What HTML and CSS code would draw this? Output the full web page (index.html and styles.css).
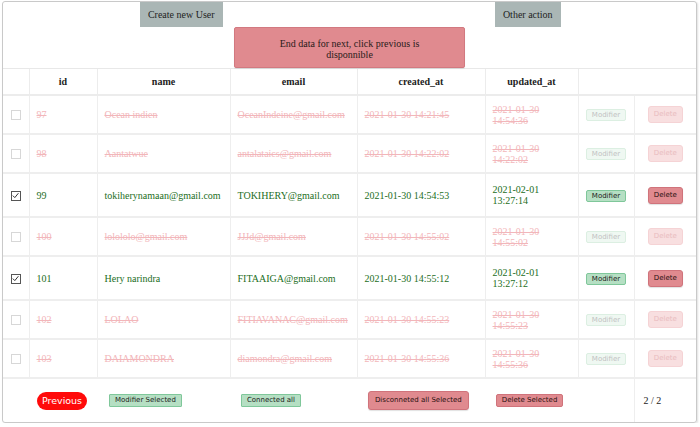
FILE: index.html
```html
<!DOCTYPE html>
<html>
<head>
<meta charset="utf-8">
<link rel="stylesheet" href="styles.css">
</head>
<body>
<div class="card">
  <div class="top">
    <div class="half"><button class="gray-btn">Create new User</button></div>
    <div class="half"><button class="gray-btn">Other action</button></div>
  </div>
  <div class="notice-row">
    <div class="notice">End data for next, click previous is disponnible</div>
  </div>
  <table class="users">
    <colgroup>
      <col class="c-check"><col class="c-id"><col class="c-name"><col class="c-email"><col class="c-created"><col class="c-updated"><col class="c-mod"><col class="c-del">
    </colgroup>
    <thead>
      <tr><th></th><th>id</th><th>name</th><th>email</th><th>created_at</th><th>updated_at</th><th colspan="2"></th></tr>
    </thead>
    <tbody>
      <tr class="off">
        <td class="chk"><span class="box"></span></td>
        <td><s>97</s></td><td><s>Ocean indien</s></td><td><s>OceanIndeine@gmail.com</s></td>
        <td><s>2021-01-30 14:21:45</s></td><td><s>2021-01-30 14:54:36</s></td>
        <td class="act"><button class="mod">Modifier</button></td><td class="act"><button class="del">Delete</button></td>
      </tr>
      <tr class="off">
        <td class="chk"><span class="box"></span></td>
        <td><s>98</s></td><td><s>Aantatwue</s></td><td><s>antalataics@gmail.com</s></td>
        <td><s>2021-01-30 14:22:02</s></td><td><s>2021-01-30 14:22:02</s></td>
        <td class="act"><button class="mod">Modifier</button></td><td class="act"><button class="del">Delete</button></td>
      </tr>
      <tr class="on">
        <td class="chk"><span class="box checked"><svg viewBox="0 0 9 9" width="9" height="9"><path d="M1.8 4.6 L3.8 6.6 L7.4 2.2" fill="none" stroke="#333" stroke-width="1"/></svg></span></td>
        <td>99</td><td>tokiherynamaan@gmail.com</td><td>TOKIHERY@gmail.com</td>
        <td>2021-01-30 14:54:53</td><td>2021-02-01 13:27:14</td>
        <td class="act"><button class="mod">Modifier</button></td><td class="act"><button class="del">Delete</button></td>
      </tr>
      <tr class="off">
        <td class="chk"><span class="box"></span></td>
        <td><s>100</s></td><td><s>lolololo@gmail.com</s></td><td><s>JJJd@gmail.com</s></td>
        <td><s>2021-01-30 14:55:02</s></td><td><s>2021-01-30 14:55:02</s></td>
        <td class="act"><button class="mod">Modifier</button></td><td class="act"><button class="del">Delete</button></td>
      </tr>
      <tr class="on">
        <td class="chk"><span class="box checked"><svg viewBox="0 0 9 9" width="9" height="9"><path d="M1.8 4.6 L3.8 6.6 L7.4 2.2" fill="none" stroke="#333" stroke-width="1"/></svg></span></td>
        <td>101</td><td>Hery narindra</td><td>FITAAIGA@gmail.com</td>
        <td>2021-01-30 14:55:12</td><td>2021-02-01 13:27:12</td>
        <td class="act"><button class="mod">Modifier</button></td><td class="act"><button class="del">Delete</button></td>
      </tr>
      <tr class="off">
        <td class="chk"><span class="box"></span></td>
        <td><s>102</s></td><td><s>LOLAO</s></td><td><s>FITIAVANAC@gmail.com</s></td>
        <td><s>2021-01-30 14:55:23</s></td><td><s>2021-01-30 14:55:23</s></td>
        <td class="act"><button class="mod">Modifier</button></td><td class="act"><button class="del">Delete</button></td>
      </tr>
      <tr class="off">
        <td class="chk"><span class="box"></span></td>
        <td><s>103</s></td><td><s>DAIAMONDRA</s></td><td><s>diamondra@gmail.com</s></td>
        <td><s>2021-01-30 14:55:36</s></td><td><s>2021-01-30 14:55:36</s></td>
        <td class="act"><button class="mod">Modifier</button></td><td class="act"><button class="del">Delete</button></td>
      </tr>
    </tbody>
    <tfoot>
      <tr>
        <td colspan="7" class="foot-actions">
          <div class="foot-bar">
            <button class="prev">Previous</button>
            <button class="g-btn b-modsel">Modifier Selected</button>
            <button class="g-btn b-conn">Connected all</button>
            <button class="r-btn big b-disc">Disconneted all Selected</button>
            <button class="r-btn b-delsel">Delete Selected</button>
          </div>
        </td>
        <td class="pages">2 / 2</td>
      </tr>
    </tfoot>
  </table>
</div>
</body>
</html>
```

FILE: styles.css
```css
html, body {
  margin: 0;
  padding: 0;
  background: #fff;
}
body {
  font-family: "Liberation Serif", "Times New Roman", serif;
  font-size: 10px;
  color: #222;
}
.card {
  box-sizing: border-box;
  width: 695px;
  margin: 1px 0 0 2px;
  border: 1px solid #c9c9c9;
  border-radius: 3px;
  box-shadow: 1px 1px 2px rgba(0,0,0,0.12);
  overflow: hidden;
}
.top {
  display: grid;
  grid-template-columns: 1fr 1fr;
  height: 25px;
}
.half {
  display: flex;
  justify-content: center;
  padding-left: 10px;
}
.gray-btn {
  font-family: "Liberation Serif", serif;
  font-size: 10px;
  color: #222;
  background: #aab6b5;
  border: none;
  border-radius: 0;
  padding: 0 8px;
  height: 25px;
  margin: 0;
}
.notice-row {
  display: flex;
  justify-content: center;
  height: 41px;
}
.notice {
  box-sizing: border-box;
  width: 231px;
  height: 41px;
  padding: 10px 38px 0;
  background: #e08a8f;
  border: 1px solid #d27980;
  border-radius: 2px;
  text-align: center;
  line-height: 11px;
  color: #2a1a1a;
  box-shadow: 0 1px 1px rgba(0,0,0,0.08);
}
.users {
  width: 693px;
  table-layout: fixed;
  border-collapse: collapse;
}
.c-check { width: 26px; }
.c-id { width: 68px; }
.c-name { width: 133px; }
.c-email { width: 127px; }
.c-created { width: 128px; }
.c-updated { width: 93px; }
.c-mod { width: 56px; }
.c-del { width: 62px; }
.users th {
  height: 25px;
  font-weight: bold;
  text-align: center;
  border-top: 1px solid #e8e8e8;
  border-bottom: 2px solid #ececec;
  border-left: 1px solid #ececec;
  padding: 0;
}
.users th:first-child { border-left: none; }
.users td {
  border-top: 2px solid #eeeeee;
  border-left: 1px solid #eeeeee;
  padding: 0 7px 0 7px;
  line-height: 11px;
  vertical-align: middle;
}
.users td:first-child { border-left: none; }
tr.off { height: 39px; }
tr.on { height: 44px; }
tr.on td { color: #236e23; }
tr.off td, tr.off s {
  color: #f2b6ba;
}
s { text-decoration: line-through; }
.users td.chk {
  padding: 0;
  text-align: center;
}
.box {
  display: inline-block;
  box-sizing: border-box;
  width: 10px;
  height: 10px;
  border: 1px solid #d7d7d7;
  vertical-align: middle;
}
.box.checked {
  border-color: #555;
}
.box svg {
  display: block;
  margin: -0.5px 0 0 -0.5px;
}
.users td.act {
  padding: 0;
  text-align: center;
}
button {
  font-family: "DejaVu Sans", Verdana, sans-serif;
  cursor: pointer;
}
.mod {
  font-size: 7px;
  line-height: 8px;
  padding: 1px 5px;
  background: #b5dfc3;
  border: 1px solid #7fc79a;
  border-radius: 2px;
  color: #1c1c1c;
}
.del {
  font-size: 7px;
  line-height: 9px;
  padding: 3px 5px;
  background: #e08a8f;
  border: 1px solid #d0737b;
  border-radius: 3px;
  color: #2a1010;
  box-shadow: 0 1px 1px rgba(0,0,0,0.12);
}
tr.off .mod {
  background: #eff8f2;
  border-color: #dcefe2;
  color: #c2c2c2;
}
tr.off .del {
  background: #f8dfe0;
  border-color: #f5d3d5;
  color: #e9bcbf;
  box-shadow: none;
}
tfoot td {
  height: 43px;
}
.users td.foot-actions {
  padding: 0 0 0 34px;
}
.foot-bar {
  display: flex;
  align-items: center;
}
.prev {
  font-size: 9.5px;
  height: 18px;
  padding: 0 4px;
  background: #ff0a0a;
  color: #fff;
  border: none;
  border-radius: 9px;
  width: 50px;
}
.g-btn {
  font-size: 7px;
  line-height: 9px;
  padding: 1px 5px;
  background: #b5dfc3;
  border: 1px solid #7fc79a;
  border-radius: 1px;
  color: #1c1c1c;
}
.r-btn {
  font-size: 7px;
  line-height: 9px;
  padding: 1px 5px;
  background: #e08a8f;
  border: 1px solid #d0737b;
  border-radius: 2px;
  color: #2a1010;
}
.r-btn.big {
  padding: 4px 6px;
  border-radius: 3px;
  box-shadow: 0 1px 1px rgba(0,0,0,0.12);
}
.b-modsel { margin-left: 22px; }
.b-conn { margin-left: 59px; }
.b-disc { margin-left: 67px; }
.b-delsel { margin-left: 27px; }
.users td.pages {
  padding-left: 9px;
  color: #222;
}
```
